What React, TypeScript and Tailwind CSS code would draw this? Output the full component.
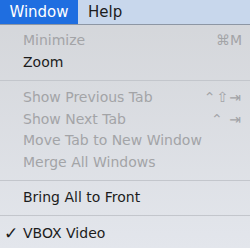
export default function App() {
  const font = { fontFamily: '"Lucida Grande", "DejaVu Sans", sans-serif' };
  const item = "flex h-[21.5px] items-center justify-between pl-[23px] pr-[8px] text-[14px]";
  const off = "text-[#a3a4a7]";
  const on = "text-[#1c1c1c]";
  const sep = <div className="my-[6.5px] h-px bg-[#c3c6cc]" />;

  return (
    <div style={font} className="relative h-[248px] w-[250px] overflow-hidden bg-gradient-to-b from-[#d3d5d9] to-[#e3e6ec]">
      <div className="flex h-[25px] border-b border-[#8d96a4] bg-[#c8d7ec] text-[15px]">
        <div className="flex w-[78px] items-center justify-center bg-[#1f6ee0] text-white">Window</div>
        <div className="flex items-center pl-[10px] text-[#1c1c1c]">Help</div>
      </div>
      <div className="pt-[5px]">
        <div className={`${item} ${off}`}>
          <span>Minimize</span>
          <span>⌘M</span>
        </div>
        <div className={`${item} ${on}`}>
          <span>Zoom</span>
        </div>
        {sep}
        <div className={`${item} ${off}`}>
          <span>Show Previous Tab</span>
          <span className="tracking-[1px]">⌃⇧⇥</span>
        </div>
        <div className={`${item} ${off}`}>
          <span>Show Next Tab</span>
          <span className="tracking-[1px]">⌃ ⇥</span>
        </div>
        <div className={`${item} ${off}`}>
          <span>Move Tab to New Window</span>
        </div>
        <div className={`${item} ${off}`}>
          <span>Merge All Windows</span>
        </div>
        {sep}
        <div className={`${item} ${on}`}>
          <span>Bring All to Front</span>
        </div>
        {sep}
        <div className={`relative ${item} ${on}`}>
          <span className="absolute left-[4px] text-[17px]">✓</span>
          <span>VBOX Video</span>
        </div>
      </div>
    </div>
  );
}
